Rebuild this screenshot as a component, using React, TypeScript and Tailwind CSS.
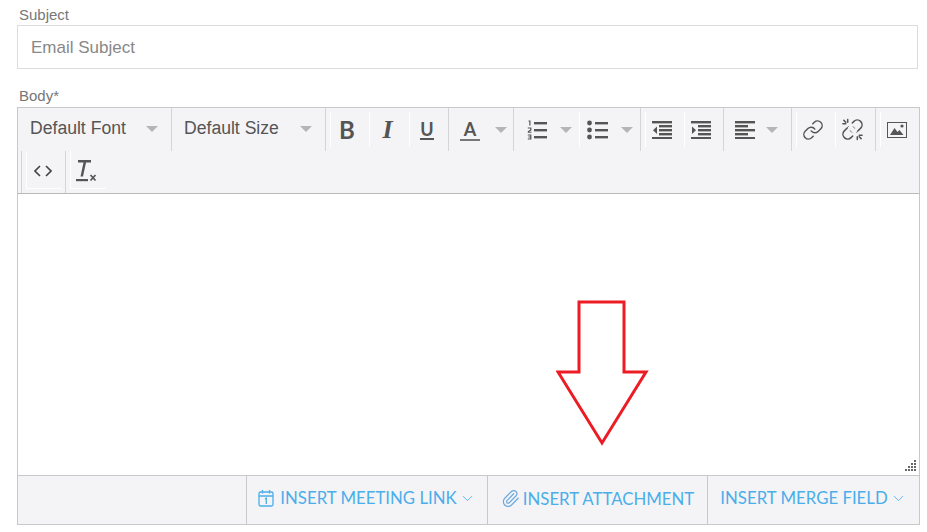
import React from "react";
import { ChevronDown, Paperclip, Link as LinkIcon } from "lucide-react";

const Caret = () => (
  <span className="block h-0 w-0 border-x-[6px] border-t-[6px] border-x-transparent border-t-[#b5b5b8]" />
);

const ToolButton = ({
  width,
  children,
}: {
  width: string;
  children: React.ReactNode;
}) => (
  <div className={`flex h-[35px] items-center justify-center border-l border-white ${width}`}>
    {children}
  </div>
);

const Group = ({
  width,
  children,
}: {
  width: string;
  children: React.ReactNode;
}) => (
  <div className={`flex h-[43px] items-center border-l border-[#d5d5d8] pl-[4px] ${width}`}>
    {children}
  </div>
);

const AlignIcon = () => (
  <svg width="20" height="18" viewBox="0 0 20 18" fill="#555">
    <rect x="0" y="0" width="20" height="2.4" />
    <rect x="0" y="4" width="13" height="2.4" />
    <rect x="0" y="8" width="20" height="2.4" />
    <rect x="0" y="12" width="13" height="2.4" />
    <rect x="0" y="16" width="20" height="2.4" />
  </svg>
);

const IndentIcon = ({ flip }: { flip?: boolean }) => (
  <svg width="20" height="18" viewBox="0 0 20 18" fill="#555">
    <rect x="0" y="0" width="20" height="2.4" />
    <rect x="7" y="4" width="13" height="2.4" />
    <rect x="7" y="8" width="13" height="2.4" />
    <rect x="7" y="12" width="13" height="2.4" />
    <rect x="0" y="16" width="20" height="2.4" />
    {flip ? <path d="M1 5.5l4 3.7-4 3.7z" /> : <path d="M5 5.5L1 9.2l4 3.7z" />}
  </svg>
);

const NumberedIcon = () => (
  <svg width="20" height="20" viewBox="0 0 20 20" fill="#555">
    <rect x="7" y="2" width="13" height="2.4" />
    <rect x="7" y="9" width="13" height="2.4" />
    <rect x="7" y="16" width="13" height="2.4" />
    <path d="M1.5 0.5h2v5h-1.2v-4h-.8zM0.8 7.5h3.6v3l-2.4 1.3h2.4v1H0.8v-1.6l2.4-1.4V8.5H0.8zM0.8 14.5h3.6v5H0.8v-1h2.4v-1H1.4v-1h1.8v-1H0.8z" />
  </svg>
);

const BulletIcon = () => (
  <svg width="21" height="20" viewBox="0 0 21 20" fill="#555">
    <circle cx="2.5" cy="3" r="2.4" />
    <circle cx="2.5" cy="10" r="2.4" />
    <circle cx="2.5" cy="17" r="2.4" />
    <rect x="8" y="2" width="13" height="2.4" />
    <rect x="8" y="9" width="13" height="2.4" />
    <rect x="8" y="16" width="13" height="2.4" />
  </svg>
);

const ImageIcon = () => (
  <svg width="20" height="16" viewBox="0 0 20 16">
    <rect x="0.5" y="0.5" width="19" height="15" fill="none" stroke="#555" />
    <path d="M3 13l4.5-7 3 4 2-2 4 5z" fill="#555" />
    <circle cx="15" cy="4" r="1.6" fill="#555" />
  </svg>
);

// chain with a gap in the middle and little sparks either side
const UnlinkIcon = () => (
  <svg width="23" height="23" viewBox="0 0 24 24" fill="none" stroke="#555" strokeWidth="1.6" strokeLinecap="round">
    <path d="M10 13a5 5 0 0 0 7.54.54l3-3a5 5 0 0 0-7.07-7.07l-1.72 1.71" />
    <path d="M14 11a5 5 0 0 0-7.54-.54l-3 3a5 5 0 0 0 7.07 7.07l1.71-1.71" />
    <path d="M8.5 8.5l7 7" stroke="#f4f4f6" strokeWidth="4.5" strokeLinecap="butt" />
    <path d="M7 1.5v3M2 6h3M3 2.5l2 2M17 22.5v-3M22 18h-3M21 21.5l-2-2" />
  </svg>
);

const CalendarIcon = () => (
  <svg width="16" height="18" viewBox="0 0 16 18" fill="none" stroke="#4aaeea" strokeWidth="1.3" className="mr-[6px]">
    <rect x="1" y="3" width="14" height="14" rx="1.5" />
    <path d="M1 7h14M4.5 1v3.5M11.5 1v3.5M7 10l1.3-.8V15" />
  </svg>
);

const FooterButton = ({
  width,
  icon,
  label,
  chevron,
  className,
}: {
  width: string;
  icon?: React.ReactNode;
  label: string;
  chevron?: boolean;
  className: string;
}) => (
  <div className={`flex items-center justify-center border-l border-[#c8c8cb] ${width} ${className}`}>
    {icon}
    <span>{label}</span>
    {chevron && <ChevronDown size={17} strokeWidth={1.2} className="ml-[2px]" />}
  </div>
);

export default function App() {
  return (
    <div className="h-[532px] w-[927px] bg-white pl-[17px] pt-[6px] font-['Liberation_Sans',sans-serif]">
      <label className="block pl-[2px] text-[15px] leading-[17px] text-[#777]">Subject</label>
      <input
        readOnly
        placeholder="Email Subject"
        className="mt-[2px] block h-[44px] w-[901px] border border-[#dcdcdc] pt-[2px] pl-[13px] text-[17px] placeholder:text-[#888]"
      />
      <label className="mt-[18px] block pl-[2px] text-[15px] leading-[17px] text-[#777]">Body*</label>
      <div className="mt-[3px] w-[903px] border border-[#c8c8cb] bg-[#f4f4f6]">
        <div className="border-b border-[#b9b9bb]">
          <div className="flex h-[43px] text-[#555]">
            <div className="flex w-[153px] items-center justify-between pb-[2px] pl-[12px] pr-[13px] text-[17.6px]">
              <span>Default Font</span>
              <Caret />
            </div>
            <div className="flex w-[154px] items-center justify-between border-l border-[#d5d5d8] pb-[2px] pl-[12px] pr-[13px] text-[17.6px]">
              <span>Default Size</span>
              <Caret />
            </div>
            <Group width="w-[123px]">
              <ToolButton width="w-[39px]">
                <span className="-ml-[6px] font-['Lato',sans-serif] text-[24px] font-bold">B</span>
              </ToolButton>
              <ToolButton width="w-[40px]">
                <span className="-ml-[4px] font-['Liberation_Serif',serif] text-[26px] font-bold italic">I</span>
              </ToolButton>
              <ToolButton width="w-[39px]">
                <span className="-ml-[4px] border-b-[2px] border-[#555] font-['Lato',sans-serif] text-[18px] leading-[18px] font-bold">U</span>
              </ToolButton>
            </Group>
            <Group width="w-[65px]">
              <div className="flex h-[35px] w-full items-center pl-[7px]">
                <span className="w-[20px] border-b-[2px] border-[#777] text-center font-['Lato',sans-serif] text-[18px] leading-[20px] font-bold">A</span>
                <span className="ml-[15px]"><Caret /></span>
              </div>
            </Group>
            <Group width="w-[66px]">
              <div className="flex h-[35px] w-full items-center pl-[9px]">
                <NumberedIcon />
                <span className="ml-[13px]"><Caret /></span>
              </div>
            </Group>
            <div className="flex h-[43px] w-[61px] items-center">
              <div className="flex h-[35px] w-full items-center border-l border-white pl-[7px]">
                <BulletIcon />
                <span className="ml-[13px]"><Caret /></span>
              </div>
            </div>
            <Group width="w-[83px]">
              <ToolButton width="w-[39px]"><span className="-ml-[6px] flex"><IndentIcon /></span></ToolButton>
              <ToolButton width="w-[39px]"><span className="-ml-[6px] flex"><IndentIcon flip /></span></ToolButton>
            </Group>
            <Group width="w-[68px]">
              <div className="flex h-[35px] w-full items-center pl-[7px]">
                <AlignIcon />
                <span className="ml-[11px]"><Caret /></span>
              </div>
            </Group>
            <Group width="w-[84px]">
              <ToolButton width="w-[39px]"><span className="-ml-[6px] flex"><LinkIcon size={22} strokeWidth={1.6} /></span></ToolButton>
              <ToolButton width="w-[40px]"><span className="-ml-[6px] flex"><UnlinkIcon /></span></ToolButton>
            </Group>
            <Group width="w-[44px]">
              <ToolButton width="w-[38px]"><span className="-ml-[6px] flex"><ImageIcon /></span></ToolButton>
            </Group>
          </div>
          <div className="flex h-[42px] pl-[3px] text-[#555]">
            <div className="flex h-[42px] w-[44px] border-l border-[#d5d5d8] pl-[4px]">
              <div className="flex h-[38px] w-[36px] items-center justify-center border-b border-l border-white">
                <svg width="18" height="12" viewBox="0 0 18 12" fill="none" stroke="#444" strokeWidth="1.6" className="-ml-[4px] mt-[2px]">
                  <path d="M6 1L1 6l5 5M12 1l5 5-5 5" />
                </svg>
              </div>
            </div>
            <div className="flex h-[42px] w-[44px] border-l border-[#d5d5d8] pl-[4px]">
              <div className="flex h-[38px] w-[36px] items-center justify-center border-b border-l border-white">
                <svg width="21" height="22" viewBox="0 0 21 22" fill="#555" className="-ml-[4px] mt-[2px]">
                  <path d="M2 0h13v2.4h-5l-3 14H4.5L7.5 2.4H2z" />
                  <rect x="0" y="19" width="12" height="2.2" />
                  <path d="M14.5 15l5 5.5M19.5 15l-5 5.5" stroke="#555" strokeWidth="1.7" />
                </svg>
              </div>
            </div>
          </div>
        </div>
        <div className="relative h-[281px] bg-white">
          <svg width="96" height="146" viewBox="0 0 96 146" className="absolute left-[538px] top-[106px]">
            <path
              d="M23 2H68V72H90L46 143 2 72H23Z"
              fill="none"
              stroke="#ed1c24"
              strokeWidth="3"
            />
          </svg>
          <svg width="12" height="12" viewBox="0 0 12 12" fill="#666" className="absolute bottom-[3px] right-[3px]">
            <rect x="10" y="0" width="2" height="2" />
            <rect x="10" y="3" width="2" height="2" />
            <rect x="7" y="3" width="2" height="2" />
            <rect x="10" y="6" width="2" height="2" />
            <rect x="7" y="6" width="2" height="2" />
            <rect x="4" y="6" width="2" height="2" />
            <rect x="10" y="9" width="2" height="2" />
            <rect x="7" y="9" width="2" height="2" />
            <rect x="4" y="9" width="2" height="2" />
            <rect x="1" y="9" width="2" height="2" />
          </svg>
        </div>
        <div className="flex h-[49px] border-t border-[#c8c8cb] font-['Lato',sans-serif] text-[16.8px] text-[#4aaeea]">
          <div className="w-[228px]" />
          <FooterButton
            width="w-[241px]"
            className="pb-[4px]"
            icon={<CalendarIcon />}
            label="INSERT MEETING LINK"
            chevron
          />
          <FooterButton
            width="w-[220px]"
            className="pb-[3px] gap-[3px]"
            icon={<Paperclip size={19} strokeWidth={1.5} className="text-[#6aa8e0]" />}
            label="INSERT ATTACHMENT"
          />
          <FooterButton width="w-[212px]" className="pb-[4px]" label="INSERT MERGE FIELD" chevron />
        </div>
      </div>
    </div>
  );
}
